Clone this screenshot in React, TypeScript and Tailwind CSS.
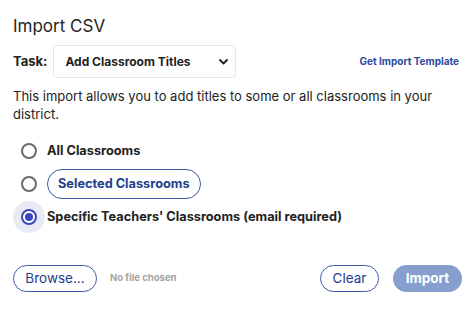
import { useState } from "react"

const font = { fontFamily: "Inter, 'Noto Sans', sans-serif" }

type Choice = "all" | "selected" | "specific"

function Radio({ checked }: { checked: boolean }) {
  return (
    <span className="relative flex h-[32px] w-[32px] shrink-0 items-center justify-center">
      {checked && <span className="absolute inset-0 rounded-full bg-[#e9eaf6]" />}
      <span
        className={`relative flex h-[16px] w-[16px] items-center justify-center rounded-full border-2 ${
          checked ? "border-[#3848b8]" : "border-[#6b6b6b]"
        } bg-white`}
      >
        {checked && <span className="h-[8px] w-[8px] rounded-full bg-[#3848b8]" />}
      </span>
    </span>
  )
}

export default function App() {
  const [choice, setChoice] = useState<Choice>("specific")

  return (
    <div className="h-[320px] w-[474px] bg-white text-[#222] px-[13px] pt-[15px]" style={font}>
      <h1 className="text-[17px] leading-[22px] font-normal text-[#1f1f1f]">Import CSV</h1>

      {/* Task row */}
      <div className="mt-[8px] flex items-center">
        <span className="text-[13px] font-bold text-[#222]">Task:</span>
        <div className="ml-[6px] flex h-[33px] w-[183px] items-center justify-between rounded-[4px] border border-[#e4e6ea] pl-[11px] pr-[7px]">
          <span className="text-[12px] font-bold text-[#1f1f1f]">Add Classroom Titles</span>
          <svg width="9" height="6" viewBox="0 0 9 6" fill="none">
            <path d="M1 1l3.5 3.5L8 1" stroke="#222" strokeWidth="1.8" strokeLinecap="round" strokeLinejoin="round" />
          </svg>
        </div>
        <a className="ml-auto mr-[2px] text-[10px] font-bold text-[#2b4a9c]">Get Import Template</a>
      </div>

      <p className="mt-[9px] text-[13px] leading-[18px] text-[#222]">
        This import allows you to add titles to some or all classrooms in your district.
      </p>

      {/* Radio options */}
      <div className="mt-[12px] flex flex-col gap-[1px]">
        <label className="flex items-center gap-[2px]" onClick={() => setChoice("all")}>
          <Radio checked={choice === "all"} />
          <span className="text-[12.75px] font-bold text-[#222]">All Classrooms</span>
        </label>
        <label className="flex items-center gap-[2px]" onClick={() => setChoice("selected")}>
          <Radio checked={choice === "selected"} />
          <span className="rounded-full border border-[#3a5aa8] px-[10px] py-[4px] text-[12.75px] font-bold text-[#1f3e8c]">
            Selected Classrooms
          </span>
        </label>
        <label className="flex items-center gap-[2px]" onClick={() => setChoice("specific")}>
          <Radio checked={choice === "specific"} />
          <span className="text-[12.75px] font-bold text-[#222]">Specific Teachers' Classrooms (email required)</span>
        </label>
      </div>

      {/* Footer */}
      <div className="mt-[32px] flex items-center">
        <button className="h-[27px] w-[84px] rounded-full border border-[#3a5aa8] text-[13.5px] text-[#1f3e8c]">
          Browse...
        </button>
        <span className="ml-[13px] text-[9.5px] font-bold text-[#a3a3a3]">No file chosen</span>
        <button className="ml-auto h-[27px] w-[59px] rounded-full border border-[#3a5aa8] text-[13.5px] text-[#1f3e8c]">
          Clear
        </button>
        <button className="ml-[14px] mr-[-1px] h-[27px] w-[69px] rounded-full bg-[#869fcf] text-[13.5px] font-bold text-white">
          Import
        </button>
      </div>
    </div>
  )
}
